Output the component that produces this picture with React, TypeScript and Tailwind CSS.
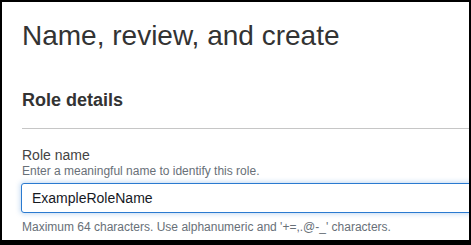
import { useState } from 'react';

export default function App() {
  const [roleName, setRoleName] = useState('ExampleRoleName');

  return (
    <div className="w-[471px] h-[245px] bg-black pl-[2px] pt-[2px]" style={{ fontFamily: '"Liberation Sans", Arial, Helvetica, sans-serif' }}>
      <div className="w-[467px] h-[238px] bg-white overflow-hidden pl-5">
        <h1 className="mt-[17px] text-[28px] leading-[34px] text-[#333] font-normal whitespace-nowrap">
          Name, review, and create
        </h1>

        {/* Role details */}
        <h2 className="mt-[36px] text-[18px] leading-[22px] font-bold text-[#333] whitespace-nowrap">Role details</h2>
        <div className="mt-[17px] border-t border-[#c6c6c6] w-[500px]" />

        <div className="mt-[18px]">
          <label className="block text-[14px] leading-[16px] text-[#444] whitespace-nowrap">Role name</label>
          <p className="text-[12px] leading-[16px] text-[#687078] whitespace-nowrap">
            Enter a meaningful name to identify this role.
          </p>
          <input
            value={roleName}
            onChange={e => setRoleName(e.target.value)}
            className="mt-[4px] -ml-px block w-[480px] h-[30px] px-[10px] rounded-[3px] border border-[#2a7ad0] text-[14px] text-[#16191f] bg-white outline-none shadow-[0_0_5px_1px_rgba(42,122,208,0.28)]"
            style={{ fontFamily: '"Liberation Sans", Arial, Helvetica, sans-serif' }}
          />
          <p className="mt-[6px] text-[12px] leading-[16px] text-[#687078] whitespace-nowrap">
            Maximum 64 characters. Use alphanumeric and '+=,.@-_' characters.
          </p>
        </div>
      </div>
    </div>
  );
}
